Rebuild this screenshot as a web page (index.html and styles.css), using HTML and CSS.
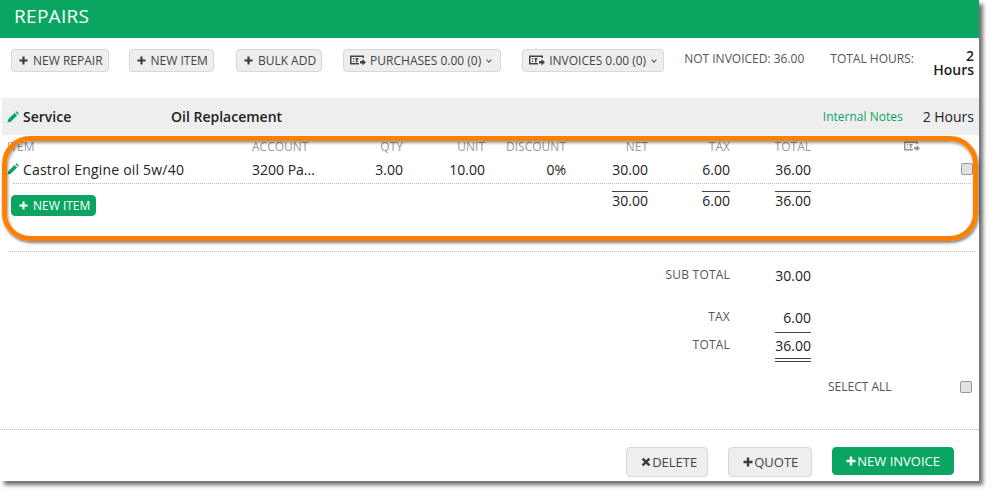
FILE: index.html
```html
<!DOCTYPE html>
<html lang="en">
<head>
  <meta charset="UTF-8">
  <meta name="viewport" content="width=device-width, initial-scale=1.0">
  <title>Repairs</title>
  <link rel="stylesheet" href="styles.css">
</head>
<body>
  <svg class="icon-defs" width="0" height="0">
    <symbol id="plus" viewBox="0 0 10 10"><path d="M3.8 0.5h2.4v3.3h3.3v2.4H6.2v3.3H3.8V6.2H0.5V3.8h3.3z"/></symbol>
    <symbol id="times" viewBox="0 0 10 10"><path d="M2.4 0.7L5 3.3 7.6 0.7 9.3 2.4 6.7 5l2.6 2.6-1.7 1.7L5 6.7 2.4 9.3 0.7 7.6 3.3 5 0.7 2.4z"/></symbol>
    <symbol id="pencil" viewBox="0 0 12 12"><path d="M0.5 11.5l0.7-3.3 6.3-6.3 2.6 2.6-6.3 6.3zM8.3 1.1l0.7-0.6q0.4-0.3 0.8 0l1.7 1.7q0.3 0.4 0 0.8l-0.6 0.7z"/></symbol>
    <symbol id="money" viewBox="0 0 16 11"><path fill-rule="evenodd" d="M0 0.5h14v2.5h-1.5V2H1.5v6H9v1.5H0zM5.5 3h3v1.5h-1v3H6V4.5h-.5zM3 3h1.2v1.2H3zM3 5.8h1.2V7H3zM10 6h2.5V4L16 7.25 12.5 10.5v-2H10z"/></symbol>
  </svg>

  <div class="sheet">
    <h1 class="title">REPAIRS</h1>

    <div class="toolbar">
      <button class="btn"><svg class="ico-plus"><use href="#plus"/></svg>NEW REPAIR</button>
      <button class="btn btn-item"><svg class="ico-plus"><use href="#plus"/></svg>NEW ITEM</button>
      <button class="btn btn-bulk"><svg class="ico-plus"><use href="#plus"/></svg>BULK ADD</button>
      <button class="btn btn-drop btn-purchases"><svg class="ico-money"><use href="#money"/></svg>PURCHASES 0.00 (0)<span class="caret"></span></button>
      <button class="btn btn-drop"><svg class="ico-money"><use href="#money"/></svg>INVOICES 0.00 (0)<span class="caret"></span></button>
      <span class="stat">NOT INVOICED: 36.00</span>
      <span class="stat stat-hours">TOTAL HOURS:</span>
      <strong class="hours-total">2 Hours</strong>
    </div>

    <div class="service-bar">
      <svg class="ico-pencil"><use href="#pencil"/></svg>
      <span class="service-type">Service</span>
      <span class="service-name">Oil Replacement</span>
      <a class="notes-link">Internal Notes</a>
      <span class="service-hours">2 Hours</span>
    </div>

    <div class="items">
      <div class="row row-head">
        <span class="col-item">ITEM</span>
        <span>ACCOUNT</span>
        <span class="num">QTY</span>
        <span class="num">UNIT</span>
        <span class="num">DISCOUNT</span>
        <span class="num">NET</span>
        <span class="num">TAX</span>
        <span class="num">TOTAL</span>
        <span class="num"><svg class="ico-money ico-faded"><use href="#money"/></svg></span>
      </div>
      <div class="row row-item">
        <span class="col-item item-name"><svg class="ico-pencil"><use href="#pencil"/></svg>Castrol Engine oil 5w/40</span>
        <span>3200 Pa...</span>
        <span class="num">3.00</span>
        <span class="num">10.00</span>
        <span class="num">0%</span>
        <span class="num">30.00</span>
        <span class="num">6.00</span>
        <span class="num">36.00</span>
        <span></span>
        <span class="num"><span class="check"></span></span>
      </div>
      <div class="rule rule-item"></div>
      <div class="row row-sum">
        <span class="col-item"><button class="btn btn-green btn-small"><svg class="ico-plus"><use href="#plus"/></svg>NEW ITEM</button></span>
        <span></span>
        <span></span>
        <span></span>
        <span></span>
        <span class="num"><span class="sum">30.00</span></span>
        <span class="num"><span class="sum">6.00</span></span>
        <span class="num"><span class="sum">36.00</span></span>
      </div>
    </div>
    <div class="rule rule-section"></div>

    <div class="totals">
      <div class="total-row total-sub"><span>SUB TOTAL</span><b>30.00</b></div>
      <div class="total-row total-tax"><span>TAX</span><b>6.00</b></div>
      <div class="total-row total-all"><span>TOTAL</span><b>36.00</b></div>
      <div class="select-all"><span>SELECT ALL</span><span class="check"></span></div>
    </div>
    <div class="rule rule-footer"></div>

    <div class="footer">
      <button class="btn btn-big btn-delete"><svg class="ico-plus"><use href="#times"/></svg>DELETE</button>
      <button class="btn btn-big btn-quote"><svg class="ico-plus"><use href="#plus"/></svg>QUOTE</button>
      <button class="btn btn-big btn-green btn-invoice"><svg class="ico-plus"><use href="#plus"/></svg>NEW INVOICE</button>
    </div>

    <div class="callout"></div>
  </div>
</body>
</html>
```

FILE: styles.css
```css
* {
  box-sizing: border-box;
}
body {
  margin: 0;
  min-height: 496px;
  background-color: #ffffff;
  font-family: "Open Sans", sans-serif;
  color: #222222;
}
.icon-defs {
  position: absolute;
}
.sheet {
  position: relative;
  width: 979px;
  height: 481px;
  background-color: #ffffff;
  box-shadow: 4px 4px 4px #707070;
}
.title {
  margin: 0;
  height: 38px;
  padding: 4px 14px 0;
  background-color: #09a561;
  color: #ffffff;
  font-size: 19px;
  line-height: 24px;
  font-weight: 400;
  letter-spacing: 0.3px;
}
.toolbar {
  display: flex;
  align-items: flex-start;
  height: 60px;
  padding: 11px 5px 0 11px;
}
.btn {
  display: inline-flex;
  align-items: center;
  height: 23px;
  padding: 0 5px 0 7px;
  margin-right: 20px;
  border: 1px solid #d8d8d8;
  border-radius: 4px;
  background-color: #eeeeee;
  color: #444444;
  font-family: inherit;
  font-size: 12px;
  white-space: nowrap;
}
.btn-item {
  margin-right: 22px;
}
.btn-bulk {
  margin-right: 21px;
}
.btn-drop {
  padding: 0 5px 0 6px;
}
.btn-purchases {
  padding-right: 7px;
  margin-right: 21px;
}
.ico-plus {
  width: 9px;
  height: 9px;
  margin-right: 5px;
  fill: #3a3a3a;
}
.ico-money {
  width: 16px;
  height: 11px;
  margin-right: 4px;
  fill: #444444;
}
.ico-faded {
  margin-right: 0;
  fill: #999999;
}
.caret {
  width: 4px;
  height: 4px;
  margin: 0 2px 2px 6px;
  border-right: 1px solid #555555;
  border-bottom: 1px solid #555555;
  transform: rotate(45deg);
}
.stat {
  font-size: 12px;
  line-height: 20px;
  color: #555555;
}
.stat-hours {
  margin-left: 26px;
}
.hours-total {
  width: 45px;
  margin-left: auto;
  font-size: 14px;
  line-height: 14px;
  font-weight: 600;
  text-align: right;
}
.service-bar {
  display: flex;
  align-items: center;
  height: 37px;
  margin-left: 2px;
  padding: 0 5px;
  background-color: #eeeeee;
}
.ico-pencil {
  width: 12px;
  height: 12px;
  margin-right: 4px;
  flex-shrink: 0;
  fill: #09a561;
}
.service-type {
  width: 148px;
  font-size: 14px;
  font-weight: 600;
}
.service-name {
  font-size: 14px;
  font-weight: 600;
}
.notes-link {
  margin-left: auto;
  font-size: 12px;
  color: #09a561;
}
.service-hours {
  margin-left: 20px;
  font-size: 14px;
}
.items {
  height: 116px;
  margin-left: 2px;
}
.row {
  display: grid;
  grid-template-columns: 245px 70px 81px 82px 81px 82px 82px 81px 109px 53px;
  padding-left: 5px;
  align-items: center;
}
.row-head {
  height: 22px;
  padding-top: 1px;
  font-size: 12px;
  color: #999999;
}
.row-item {
  height: 26px;
  padding-bottom: 2px;
  font-size: 14px;
}
.item-name {
  letter-spacing: 0.2px;
}
.row-sum {
  height: 36px;
  padding-top: 7px;
  font-size: 14px;
  align-items: start;
}
.col-item {
  display: flex;
  align-items: center;
}
.num {
  display: flex;
  justify-content: flex-end;
  text-align: right;
}
.sum {
  border-top: 1px solid #444444;
  line-height: 18px;
}
.rule {
  height: 1px;
  border-top: 1px dotted #bbbbbb;
}
.rule-item {
  margin: 0 8px 0 11px;
}
.rule-section {
  margin: 0 4px 0 8px;
}
.check {
  display: block;
  width: 12px;
  height: 12px;
  border: 1px solid #999999;
  border-radius: 2px;
  background-color: #e2e2e2;
}
.btn-green {
  background-color: #09a561;
  border-color: #09a561;
  color: #ffffff;
}
.btn-green .ico-plus {
  fill: #ffffff;
}
.btn-small {
  height: 21px;
  margin: 4px 0 0 4px;
}
.totals {
  height: 177px;
  padding-top: 14px;
}
.total-row {
  display: flex;
  justify-content: flex-end;
  width: 811px;
  font-size: 14px;
}
.total-row span {
  font-size: 12px;
  line-height: 18px;
  letter-spacing: 0.2px;
  color: #555555;
  margin-right: 45px;
}
.total-row b {
  width: 36px;
  line-height: 20px;
  font-weight: 400;
  text-align: right;
}
.total-sub {
  height: 42px;
}
.total-tax {
  height: 28px;
}
.total-tax b {
  height: 25px;
  border-bottom: 1px solid #444444;
}
.total-all b {
  height: 26px;
  border-bottom: 4px double #444444;
}
.select-all {
  display: flex;
  justify-content: space-between;
  align-items: center;
  width: 144px;
  margin: 16px 0 0 828px;
  font-size: 12px;
  color: #555555;
}
.footer {
  display: flex;
  justify-content: flex-end;
  align-items: flex-start;
  padding: 17px 25px 0 0;
}
.btn-big {
  height: 30px;
  font-size: 13px;
}
.btn-big .ico-plus {
  margin-right: 1px;
  width: 10px;
  height: 10px;
}
.btn-delete {
  padding: 0 10px 0 14px;
}
.btn-quote {
  padding: 0 13px 0 14px;
}
.btn-invoice {
  height: 28px;
  margin-right: 0;
  padding: 0 13px;
}
/* annotation drawn over the items table */
.callout {
  position: absolute;
  left: 2px;
  top: 136px;
  width: 976px;
  height: 105px;
  border: 5px solid #ff8000;
  border-radius: 28px;
  box-shadow: 1px 2px 3px rgba(0, 0, 0, 0.5), inset 1px 2px 3px rgba(0, 0, 0, 0.4);
}
```
